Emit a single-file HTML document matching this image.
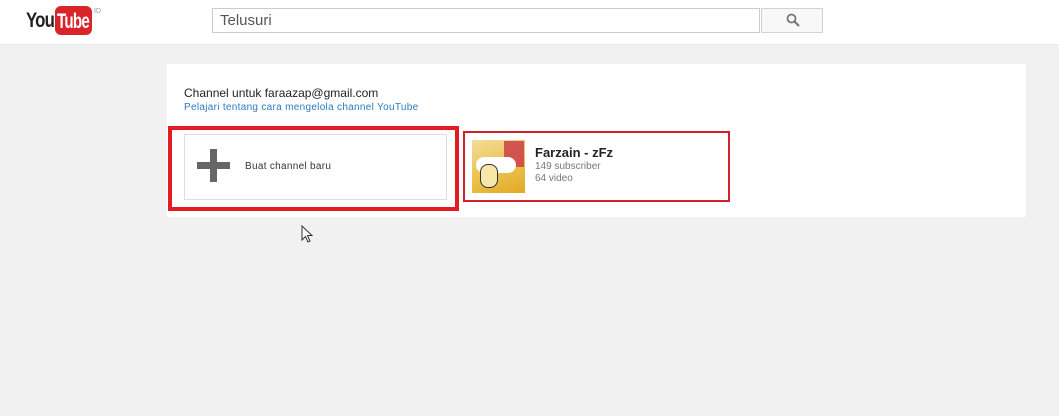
<!DOCTYPE html><html><head><style>
body{margin:0;width:1059px;height:416px;background:#f1f1f1;font-family:"Liberation Sans",sans-serif;position:relative;overflow:hidden}
.a{position:absolute}
</style></head><body>
<div class="a" style="left:0;top:0;width:1059px;height:44px;background:#fff;border-bottom:1px solid #e8e8e8"></div>
<div class="a" style="left:26px;top:9px;font:bold 21px 'Liberation Sans';color:#222;letter-spacing:-1px;transform:scaleX(.8);transform-origin:left">You</div>
<div class="a" style="left:55px;top:6px;width:37px;height:29px;background:#d9252a;border-radius:6px;overflow:hidden"></div>
<div class="a" style="left:57px;top:10px;font:bold 21px 'Liberation Sans';color:#fff;letter-spacing:-1px;transform:scaleX(.72);transform-origin:left">Tube</div>
<div class="a" style="left:94px;top:8px;font-size:7px;color:#999">ID</div>
<div class="a" style="left:212px;top:8px;width:548px;height:25px;border:1px solid #ccc;background:#fff;box-sizing:border-box"></div>
<div class="a" style="left:220px;top:12px;font-size:15px;color:#555">Telusuri</div>
<div class="a" style="left:761px;top:8px;width:62px;height:25px;border:1px solid #d3d3d3;background:#f8f8f8;box-sizing:border-box"></div>
<svg class="a" style="left:786px;top:13px" width="14" height="14"><circle cx="5.5" cy="5.5" r="4" fill="none" stroke="#777" stroke-width="1.8"/><path d="M8.5 8.5L13 13" stroke="#777" stroke-width="2.2"/></svg>
<div class="a" style="left:167px;top:64px;width:859px;height:153px;background:#fff"></div>
<div class="a" style="left:184px;top:86px;font-size:12px;color:#222">Channel untuk faraazap@gmail.com</div>
<div class="a" style="left:184px;top:102px;font-size:10px;color:#2b7bc0;letter-spacing:.3px">Pelajari tentang cara mengelola channel YouTube</div>
<div class="a" style="left:168px;top:126px;width:291px;height:85px;border:4px solid #e31c24;box-sizing:border-box"></div>
<div class="a" style="left:184px;top:134px;width:263px;height:66px;border:1px solid #ddd;box-sizing:border-box;background:#fff"></div>
<div class="a" style="left:197px;top:162px;width:33px;height:7px;background:#666"></div>
<div class="a" style="left:210px;top:149px;width:7px;height:33px;background:#666"></div>
<div class="a" style="left:245px;top:161px;font-size:10px;color:#333;letter-spacing:.3px">Buat channel baru</div>
<div class="a" style="left:463px;top:131px;width:267px;height:71px;border:2px solid #d0202a;box-sizing:border-box"></div>
<div class="a" style="left:472px;top:140px;width:53px;height:53px;background:linear-gradient(160deg,#f3dc98 0%,#eac04a 60%,#e3a923 100%)"></div>
<div class="a" style="left:504px;top:141px;width:20px;height:26px;background:#c9364a;opacity:.8"></div>
<div class="a" style="left:476px;top:157px;width:40px;height:16px;background:#fff;border-radius:8px"></div>
<div class="a" style="left:480px;top:164px;width:16px;height:22px;border:1px solid #333;border-radius:8px;background:#f6e6a8"></div>
<div class="a" style="left:535px;top:145px;font-size:13px;font-weight:bold;color:#222">Farzain - zFz</div>
<div class="a" style="left:535px;top:161px;font-size:10px;color:#777">149 subscriber</div>
<div class="a" style="left:535px;top:173px;font-size:10px;color:#777">64 video</div>
<svg class="a" style="left:301px;top:225px" width="14" height="20"><path d="M1 1L1 15L4.5 11.5L7 17L9 16L6.5 10.5L11 10.5Z" fill="#fff" stroke="#333" stroke-width="1"/></svg>
</body></html>
